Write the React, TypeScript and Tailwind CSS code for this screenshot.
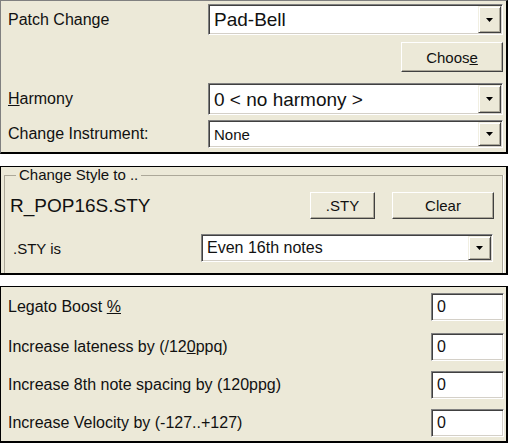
function Arrow() {
  return (
    <div className="flex w-[23px] items-center justify-center bg-[#ece9d8] border border-t-[#f1efe2] border-l-[#f1efe2] border-r-[#404040] border-b-[#404040] shadow-[inset_1px_1px_0_white,inset_-1px_-1px_0_#aca899]">
      <svg width="7" height="4" viewBox="0 0 7 4">
        <path d="M0 0h7L3.5 4z" fill="black" />
      </svg>
    </div>
  );
}

function Combo({ value, h, text }: { value: string; h: string; text: string }) {
  return (
    <div
      className={`flex flex-1 items-stretch bg-white border border-t-[#808080] border-l-[#808080] border-r-white border-b-white shadow-[inset_1px_1px_0_#404040,inset_-1px_-1px_0_#d4d0c8] p-[1px] ${h}`}
    >
      <span className={`flex flex-1 items-center pl-[4px] text-[#111] ${text}`}>{value}</span>
      <Arrow />
    </div>
  );
}

function Button({ children, w, h }: { children: React.ReactNode; w: string; h: string }) {
  return (
    <div
      className={`flex items-center justify-center bg-[#ece9d8] border border-t-white border-l-white border-r-[#404040] border-b-[#404040] shadow-[inset_-1px_-1px_0_#aca899] text-[15px] text-[#111] ${w} ${h}`}
    >
      {children}
    </div>
  );
}

function Field({ value }: { value: string }) {
  return (
    <div className="flex h-[28px] w-[73px] items-center bg-white border border-t-[#808080] border-l-[#808080] border-r-white border-b-white shadow-[inset_1px_1px_0_#404040,inset_-1px_-1px_0_#d4d0c8] pl-[5px] text-[16px] text-[#111]">
      {value}
    </div>
  );
}

export default function App() {
  const rows = [
    { label: <>Legato Boost <u>%</u></>, mt: "mt-[6px]" },
    { label: <>Increase lateness by (/12<u>0</u>ppq)</>, mt: "mt-[12px]" },
    { label: <>Increase 8th note spacing by (120ppg)</>, mt: "mt-[10px]" },
    { label: <>Increase Velocity by (-127..+127)</>, mt: "mt-[10px]" },
  ];

  return (
    <div className="w-[508px] h-[443px] bg-white font-['Liberation_Sans',Arial,sans-serif] text-[#111] leading-none">
      {/* Patch / harmony panel */}
      <div className="flex h-[154px] flex-col bg-[#ece9d8] border-t border-l border-t-[#808080] border-l-[#808080] border-r-2 border-b-2 border-r-black border-b-black">
        <div className="mt-[3px] flex h-[31px] items-center">
          <div className="w-[207px] pl-[7px] text-[16px]">Patch Change</div>
          <div className="mr-[3px] flex flex-1">
            <Combo value="Pad-Bell" h="h-[31px]" text="text-[19px]" />
          </div>
        </div>
        <div className="mt-[7px] flex justify-end pr-[3px]">
          <Button w="w-[102px]" h="h-[30px]">
            Choos<u>e</u>
          </Button>
        </div>
        <div className="mt-[11px] flex h-[32px] items-center">
          <div className="w-[207px] pl-[7px] text-[16px]">
            <u>H</u>armony
          </div>
          <div className="mr-[3px] flex flex-1">
            <Combo value="0 < no harmony >" h="h-[32px]" text="text-[19px]" />
          </div>
        </div>
        <div className="mt-[5px] flex h-[28px] items-center">
          <div className="w-[207px] pl-[7px] text-[16px]">Change Instrument:</div>
          <div className="mr-[3px] flex flex-1">
            <Combo value="None" h="h-[28px]" text="text-[15px]" />
          </div>
        </div>
      </div>

      {/* Style panel */}
      <div className="mt-[12px] flex h-[109px] flex-col bg-[#ece9d8] border-t border-l border-t-black border-l-black border-r-2 border-b-2 border-r-black border-b-black">
        <fieldset className="mx-[3px] flex flex-1 flex-col border border-b-0 border-[#aca899] shadow-[1px_0_0_white]">
          <legend className="ml-[11px] px-[3px] text-[15px] leading-[16px]">Change Style to ..</legend>
          <div className="mt-[9px] flex h-[27px] items-center pr-[8px]">
            <div className="flex-1 pl-[5px] text-[19px]">R_POP16S.STY</div>
            <Button w="w-[65px]" h="h-[27px]">.STY</Button>
            <div className="w-[17px]" />
            <Button w="w-[102px]" h="h-[27px]">Clear</Button>
          </div>
          <div className="mt-[15px] flex h-[28px] items-center pr-[9px]">
            <div className="w-[196px] pl-[8px] text-[15px]">.STY is</div>
            <Combo value="Even 16th notes" h="h-[28px]" text="text-[16px]" />
          </div>
        </fieldset>
      </div>

      {/* Timing panel */}
      <div className="mt-[11px] flex h-[157px] flex-col bg-[#ece9d8] border-t border-l border-t-black border-l-black border-r-2 border-b-2 border-r-black border-b-black">
        {rows.map((r, i) => (
          <div key={i} className={`flex h-[28px] items-center ${r.mt}`}>
            <div className="w-[430px] pl-[7px] text-[16px]">{r.label}</div>
            <Field value="0" />
          </div>
        ))}
      </div>
    </div>
  );
}
